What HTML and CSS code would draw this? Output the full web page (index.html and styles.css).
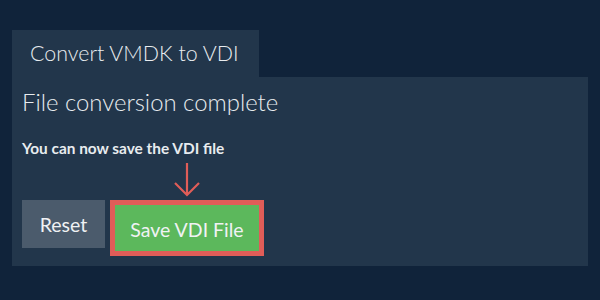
FILE: index.html
```html
<!DOCTYPE html>
<html>
<head>
<meta charset="utf-8">
<link rel="stylesheet" href="styles.css">
</head>
<body>
<div class="wrap">
  <div class="tab">Convert VMDK to VDI</div>
  <div class="panel">
    <h2 class="title">File conversion complete</h2>
    <p class="msg">You can now save the VDI file</p>
    <div class="actions">
      <button class="btn reset">Reset</button>
      <div class="save-wrap">
        <svg class="arrow" width="30" height="36" viewBox="0 0 30 36">
          <path d="M15 1 V33 M3 21 L15 33 L27 21" fill="none" stroke="#e05d58" stroke-width="2.2"/>
        </svg>
        <div class="highlight"><button class="btn save">Save VDI File</button></div>
      </div>
    </div>
  </div>
</div>
</body>
</html>
```
FILE: styles.css
```css
html, body {
  margin: 0;
  padding: 0;
  background: #10233a;
  width: 600px;
  height: 300px;
  overflow: hidden;
  font-family: Lato, "Open Sans", sans-serif;
  color: #e8ecef;
}
.wrap {
  padding: 30px 12px 0 12px;
}
.tab {
  display: inline-block;
  width: 229px;
  height: 47px;
  padding-left: 18px;
  background: #22364b;
  font-size: 21.4px;
  font-weight: 300;
  line-height: 47px;
  box-sizing: content-box;
}
.panel {
  background: #22364b;
  height: 189px;
  padding: 10px 10px 0 10px;
  box-sizing: border-box;
}
.title {
  margin: 0;
  font-weight: 300;
  font-size: 23.9px;
  line-height: 30px;
}
.msg {
  margin: 22px 0 0 0;
  font-weight: 700;
  font-size: 15.4px;
  line-height: 18px;
}
.actions {
  display: flex;
  align-items: flex-start;
  gap: 5px;
  margin-top: 43px;
}
.btn {
  border: 0;
  font-family: Lato, "Open Sans", sans-serif;
  font-size: 19.5px;
  color: #f0f2f4;
  cursor: pointer;
}
.reset {
  width: 83px;
  height: 48px;
  background: #4b5b6c;
}
.save-wrap {
  position: relative;
}
.arrow {
  position: absolute;
  left: 62px;
  top: -38px;
}
.highlight {
  border: 5px solid #e05d58;
}
.save {
  display: block;
  width: 144px;
  height: 46px;
  background: #5cb85c;
  padding-top: 4px;
}
```
